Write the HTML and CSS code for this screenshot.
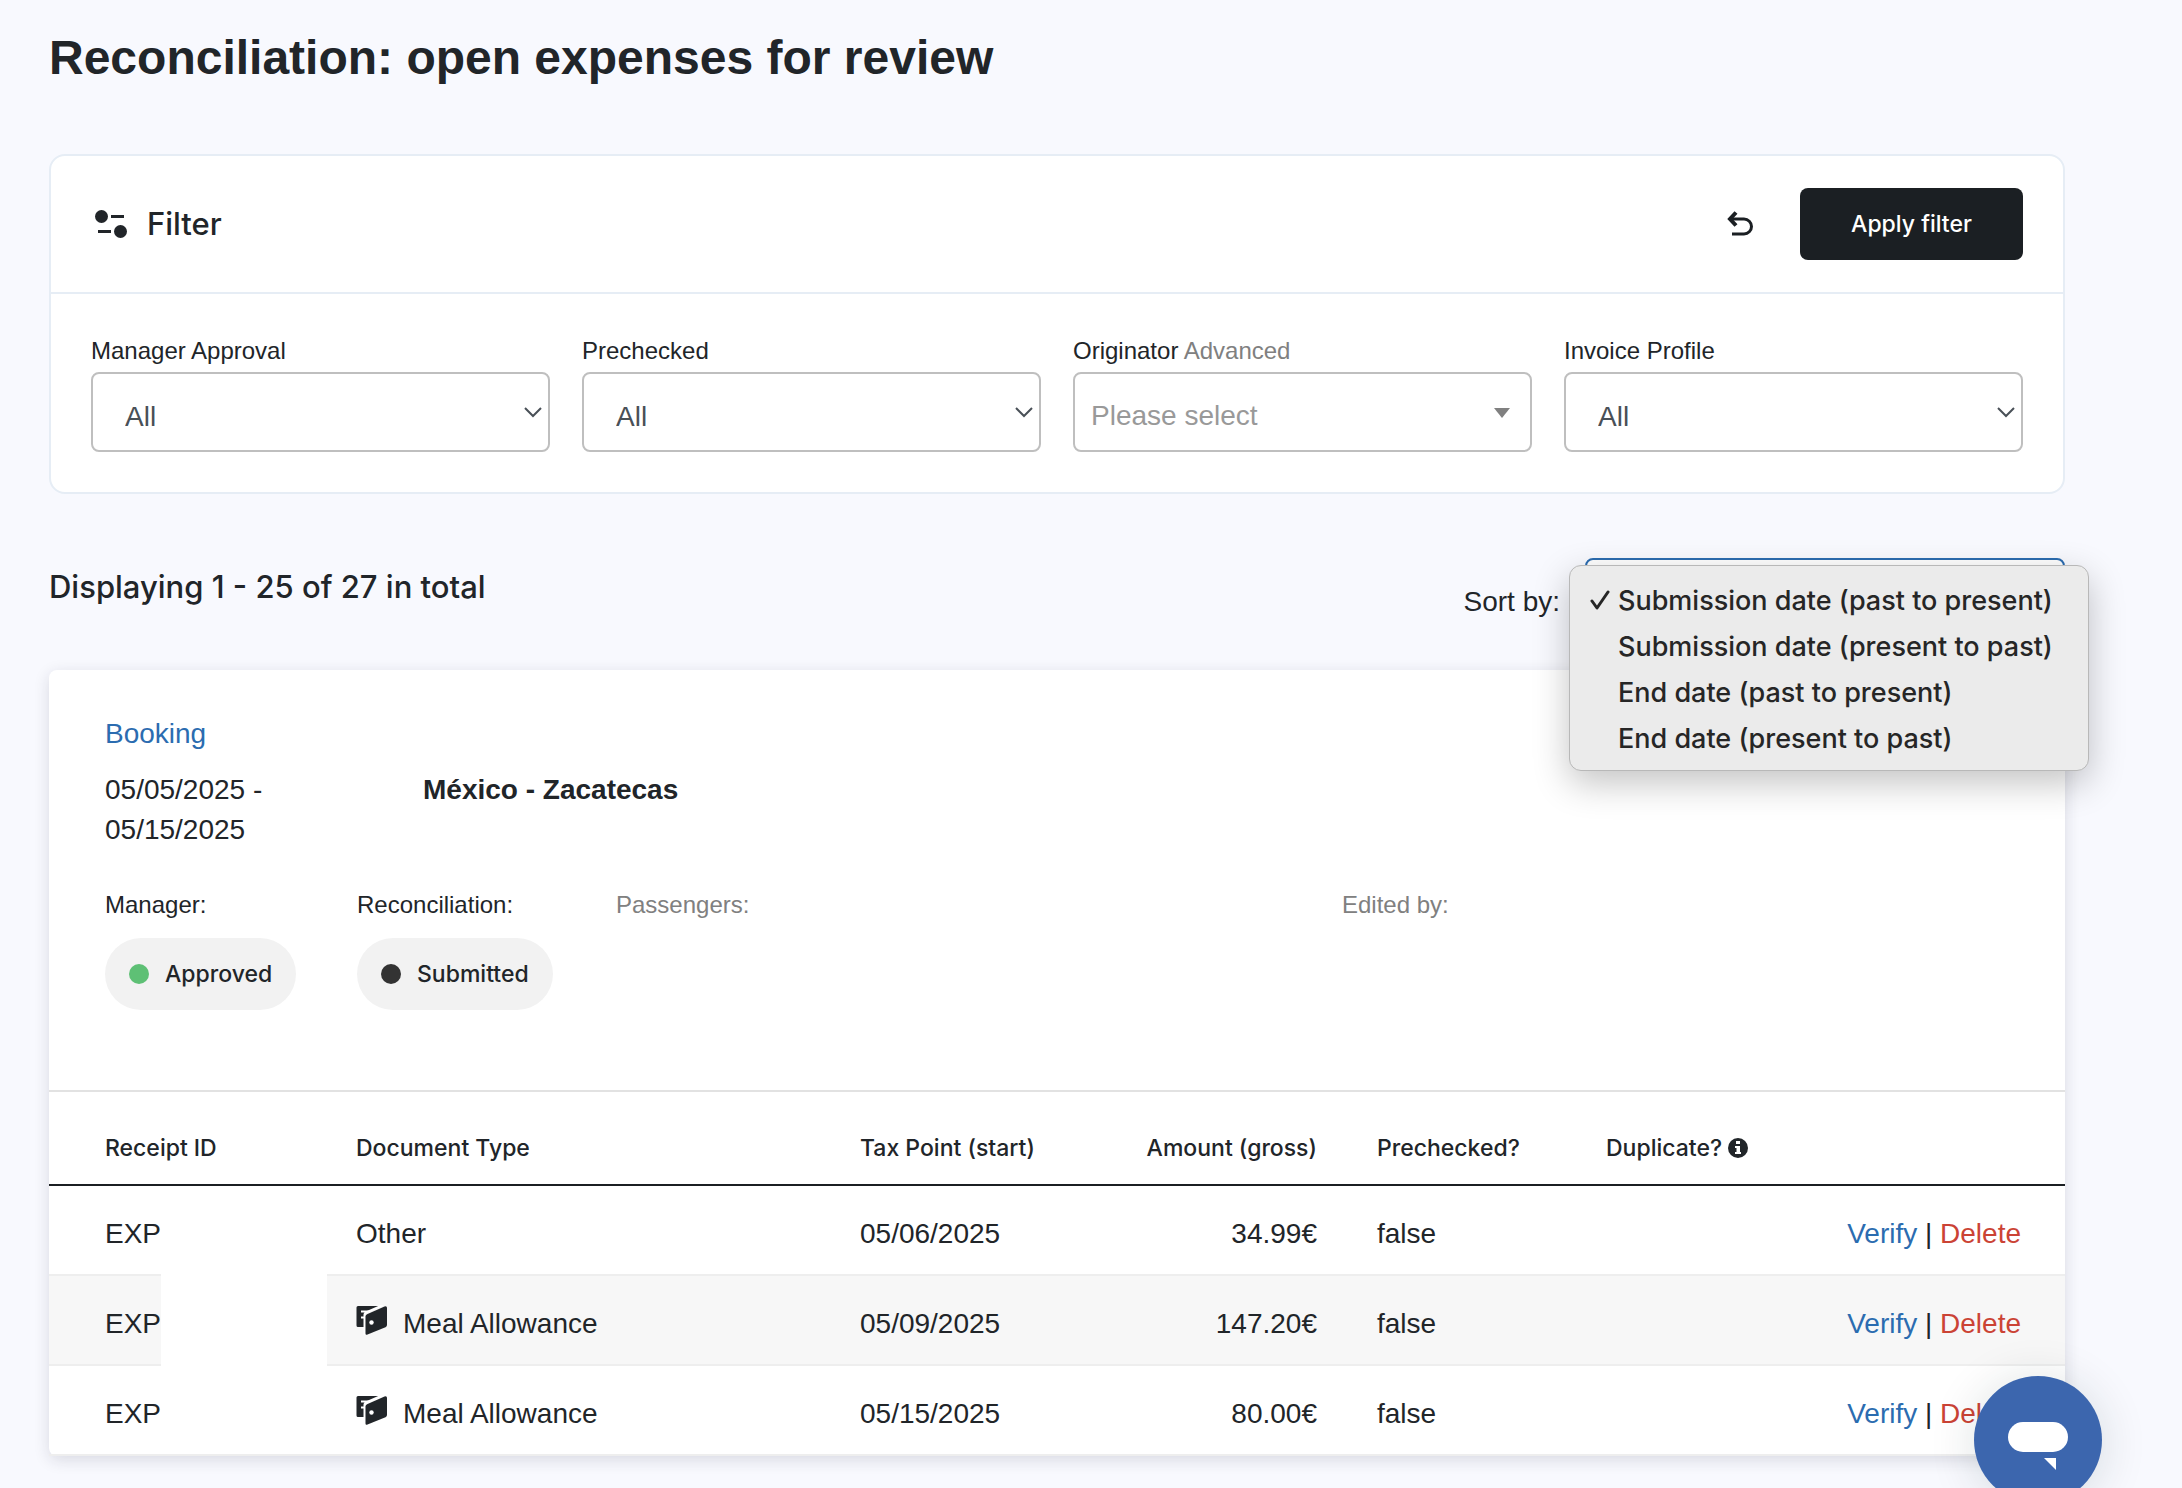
FILE: index.html
```html
<!DOCTYPE html>
<html lang="en">
<head>
<meta charset="utf-8">
<title>Reconciliation</title>
<link rel="stylesheet" href="styles.css">
</head>
<body>
<svg class="sprite" aria-hidden="true">
  <symbol id="chevron" viewBox="0 0 18 12"><path d="M1 2l8 8 8-8" fill="none" stroke="currentColor" stroke-width="2"/></symbol>
  <symbol id="wallet" viewBox="0 0 32 30">
    <path d="M2 1h23L9 8v14H2a1.500 1.500 0 0 1-1.500-1.500v-18A1.500 1.500 0 0 1 2 1z" fill="currentColor"/>
    <path d="M5 6.500h9M5 12.500h5" stroke="#fff" stroke-width="2"/>
    <path d="M8.500 30V9.500Q8.500 8 10 7.300L27 0" fill="none" stroke="#fff" stroke-width="2"/>
    <path d="M11 9.200L28.500 1.500q2.500-.8 2.500 1.500V20q0 1.500-1.500 2.200L11.500 29.500q-2 .8-2-1V11.500q0-1.600 1.500-2.300z" fill="currentColor"/>
    <circle cx="15.500" cy="17.500" r="2.200" fill="#fff"/>
  </symbol>
</svg>
<main class="page">
  <h1 class="page-title">Reconciliation: open expenses for review</h1>

  <form class="filter">
    <header class="filter-head">
      <svg class="filter-icon" viewBox="0 0 32 28" aria-hidden="true">
        <circle cx="6.500" cy="6.500" r="6.500" fill="currentColor"/><circle cx="25.500" cy="21.500" r="6.500" fill="currentColor"/>
        <path d="M16 6.500h13M3 21.500h13" stroke="currentColor" stroke-width="3"/>
      </svg>
      <h2 class="filter-title">Filter</h2>
      <button class="reset" type="reset" aria-label="Reset filter">
        <svg viewBox="0 0 28 28" aria-hidden="true"><path d="M9 2.500L3 9l6 6.500" fill="none" stroke="currentColor" stroke-width="4"/><path d="M2 9h15a7.500 7.500 0 0 1 0 15H5" fill="none" stroke="currentColor" stroke-width="3"/></svg>
      </button>
      <button class="apply" type="submit">Apply filter</button>
    </header>
    <div class="filter-fields">
      <div class="field">
        <label for="manager">Manager Approval</label>
        <div class="control"><select id="manager"><option>All</option></select><svg class="chevron"><use href="#chevron"/></svg></div>
      </div>
      <div class="field">
        <label for="prechecked">Prechecked</label>
        <div class="control"><select id="prechecked"><option>All</option></select><svg class="chevron"><use href="#chevron"/></svg></div>
      </div>
      <div class="field">
        <label for="originator">Originator <span class="muted">Advanced</span></label>
        <div class="control"><select id="originator" class="placeholder"><option>Please select</option></select><span class="caret"></span></div>
      </div>
      <div class="field">
        <label for="profile">Invoice Profile</label>
        <div class="control"><select id="profile"><option>All</option></select><svg class="chevron"><use href="#chevron"/></svg></div>
      </div>
    </div>
  </form>

  <div class="toolbar">
    <h2 class="count">Displaying 1 - 25 of 27 in total</h2>
    <label class="sort-label" for="sort">Sort by:</label>
    <div class="sort">
      <select id="sort"><option>Submission date (past to present)</option></select>
      <ul class="menu" role="listbox" aria-label="Sort by">
        <li role="option" aria-selected="true"><svg class="check" viewBox="0 0 20 20" aria-hidden="true"><path d="M2 11l5 7L18 2" fill="none" stroke="currentColor" stroke-width="3" stroke-linecap="round" stroke-linejoin="round"/></svg>Submission date (past to present)</li>
        <li role="option">Submission date (present to past)</li>
        <li role="option">End date (past to present)</li>
        <li role="option">End date (present to past)</li>
      </ul>
    </div>
  </div>

  <article class="booking">
    <header class="summary">
      <a class="booking-link" href="#">Booking</a>
      <div class="trip">
        <p class="dates">05/05/2025 -<br>05/15/2025</p>
        <h3 class="place">México - Zacatecas</h3>
      </div>
      <div class="facts">
        <div><p>Manager:</p><span class="pill"><i class="dot approved"></i>Approved</span></div>
        <div><p>Reconciliation:</p><span class="pill"><i class="dot"></i>Submitted</span></div>
        <div class="muted"><p>Passengers:</p></div>
        <div class="muted"><p>Edited by:</p></div>
      </div>
    </header>
    <table class="receipts">
      <colgroup><col class="c-id"><col class="c-type"><col class="c-date"><col class="c-amount"><col class="c-pre"><col class="c-dup"><col></colgroup>
      <thead>
        <tr><th>Receipt ID</th><th>Document Type</th><th>Tax Point (start)</th><th class="num">Amount (gross)</th><th>Prechecked?</th>
          <th>Duplicate? <svg class="info" viewBox="0 0 20 20" aria-hidden="true"><circle cx="10" cy="10" r="10" fill="currentColor"/><path d="M8 3h4v3H8zM7 8h5v6h1v2H7v-2h1.500v-4H7z" fill="#fff"/></svg></th><th></th></tr>
      </thead>
      <tbody>
        <tr><td class="id">EXP</td><td>Other</td><td>05/06/2025</td><td class="num">34.99€</td><td>false</td><td></td><td class="actions"><a href="#">Verify</a> | <a class="delete" href="#">Delete</a></td></tr>
        <tr><td class="id">EXP</td><td><svg class="wallet"><use href="#wallet"/></svg>Meal Allowance</td><td>05/09/2025</td><td class="num">147.20€</td><td>false</td><td></td><td class="actions"><a href="#">Verify</a> | <a class="delete" href="#">Delete</a></td></tr>
        <tr><td class="id">EXP</td><td><svg class="wallet"><use href="#wallet"/></svg>Meal Allowance</td><td>05/15/2025</td><td class="num">80.00€</td><td>false</td><td></td><td class="actions"><a href="#">Verify</a> | <a class="delete" href="#">Delete</a></td></tr>
      </tbody>
    </table>
  </article>
</main>
<button class="chat" type="button" aria-label="Open chat">
  <svg viewBox="0 0 60 48" aria-hidden="true"><rect width="60" height="30" rx="15" fill="#fff"/><path d="M36 36h12v12z" fill="#fff"/></svg>
</button>
</body>
</html>
```
FILE: styles.css
```css
* { box-sizing: border-box; }
body {
  margin: 0;
  background: #f8f9fe;
  color: #212529;
  font: 28px/40px "Liberation Sans", Arial, sans-serif;
}
h1, h2, h3, p, ul { margin: 0; padding: 0; }
a { color: #2b6cb0; text-decoration: none; }
button { border: 0; padding: 0; cursor: pointer; font: inherit; }
.sprite { display: none; }
.muted { color: #808080; }

.page { padding: 28px 117px 32px 49px; }
.page-title { font-size: 48px; line-height: 60px; }

.filter {
  margin-top: 66px;
  border: 2px solid #e6edf5;
  border-radius: 16px;
  background: #fff;
}
.filter-head {
  display: flex;
  align-items: center;
  height: 138px;
  padding: 0 40px 0 44px;
  border-bottom: 2px solid #e6edf5;
}
.filter-icon { width: 32px; height: 28px; }
.filter-title, .count { font: 500 31px/40px Inter, sans-serif; }
.filter-title { margin: 0 auto 0 20px; }
.reset { width: 28px; height: 28px; margin-right: 45px; background: none; color: #1b1f23; }
.reset svg { display: block; }
.apply {
  width: 223px;
  height: 72px;
  border-radius: 8px;
  background: #1b1f23;
  color: #fff;
  font: 500 23px/40px Inter, sans-serif;
}
.filter-fields {
  display: grid;
  grid-template-columns: repeat(4, 1fr);
  gap: 32px;
  padding: 40px;
}
.field label { display: block; font-size: 24px; line-height: 34px; }
.control { position: relative; margin-top: 4px; }
select {
  appearance: none;
  display: block;
  width: 100%;
  height: 80px;
  padding: 10px 32px 0;
  border: 2px solid #bfbfbf;
  border-radius: 8px;
  background: #fff;
  color: #495057;
  font: inherit;
}
select.placeholder { padding: 8px 16px 0; color: #999; }
.chevron {
  position: absolute;
  top: 34px;
  right: 8px;
  width: 18px;
  height: 12px;
  color: #495057;
}
.caret {
  position: absolute;
  top: 36px;
  right: 22px;
  border: 8px solid transparent;
  border-top: 10px solid #808080;
  border-bottom: 0;
}

.toolbar { display: flex; margin: 64px 0 32px; }
.count { flex: 1; padding-top: 9px; }
.sort-label { padding: 24px 25px 0 0; }
.sort { position: relative; width: 480px; }
.sort select { border-color: #2b6cb0; }
.menu {
  position: absolute;
  z-index: 1;
  top: 7px;
  right: -24px;
  width: 520px;
  padding: 12px 0 8px 48px;
  border: 1px solid #b8b8b8;
  border-radius: 12px;
  background: #ebebeb;
  box-shadow: 0 12px 36px rgba(0, 0, 0, .24);
  color: #262626;
  font: 500 27px/46px Inter, sans-serif;
  list-style: none;
  white-space: nowrap;
}
.check { position: absolute; top: 24px; left: 20px; width: 20px; height: 20px; }

.booking {
  border-radius: 8px;
  background: #fff;
  box-shadow: 0 4px 16px rgba(30, 30, 60, .14);
}
.summary { height: 422px; padding: 44px 56px 0; border-bottom: 2px solid #e2e2e2; }
.booking-link { display: block; }
.trip { display: flex; margin-top: 16px; }
.dates { width: 318px; }
.place { font-size: 28px; }
.facts {
  display: grid;
  grid-template-columns: 252px 259px 726px 1fr;
  margin-top: 35px;
  font-size: 24px;
}
.pill {
  display: inline-flex;
  align-items: center;
  height: 72px;
  margin-top: 13px;
  padding: 0 24px;
  gap: 16px;
  border-radius: 36px;
  background: #f2f2f2;
  font: 500 23px/40px Inter, sans-serif;
}
.dot { width: 20px; height: 20px; border-radius: 50%; background: #333; }
.approved { background: #5ec075; }

.receipts { width: 100%; table-layout: fixed; border-collapse: separate; border-spacing: 0; }
.c-id { width: 279px; }
.c-type { width: 504px; }
.c-date { width: 260px; }
.c-amount { width: 257px; }
.c-pre { width: 229px; }
.c-dup { width: 200px; }
th, td { padding: 0 32px 0 28px; text-align: left; white-space: nowrap; }
th {
  height: 94px;
  padding-top: 20px;
  border-bottom: 2px solid #1b1f23;
  font: 500 23px/40px Inter, sans-serif;
}
td { height: 90px; padding-top: 8px; border-bottom: 2px solid #eee; }
th:first-child, td:first-child { padding-left: 56px; }
tbody tr:nth-child(even) { background: #f7f7f7; }
.num { padding-left: 0; text-align: right; }
.id { position: relative; }
.id::after {
  content: "";
  position: absolute;
  inset: -2px 1px -2px 112px;
  background: #fff;
}
tbody tr:last-child .id::after { bottom: 0; }
tbody tr:first-child .id::after { top: 0; }
.actions { padding-right: 44px; text-align: right; }
.delete { color: #cb4335; }
.info { width: 20px; height: 20px; vertical-align: -2px; }
.wallet { width: 32px; height: 30px; margin-right: 15px; vertical-align: -2px; }

.chat {
  position: fixed;
  right: 80px;
  bottom: -16px;
  width: 128px;
  height: 128px;
  border-radius: 50%;
  background: #3c66ae;
  box-shadow: 0 4px 48px rgba(0, 40, 40, .14);
}
.chat svg { display: block; width: 60px; height: 48px; margin: 11px auto 0; }
```
